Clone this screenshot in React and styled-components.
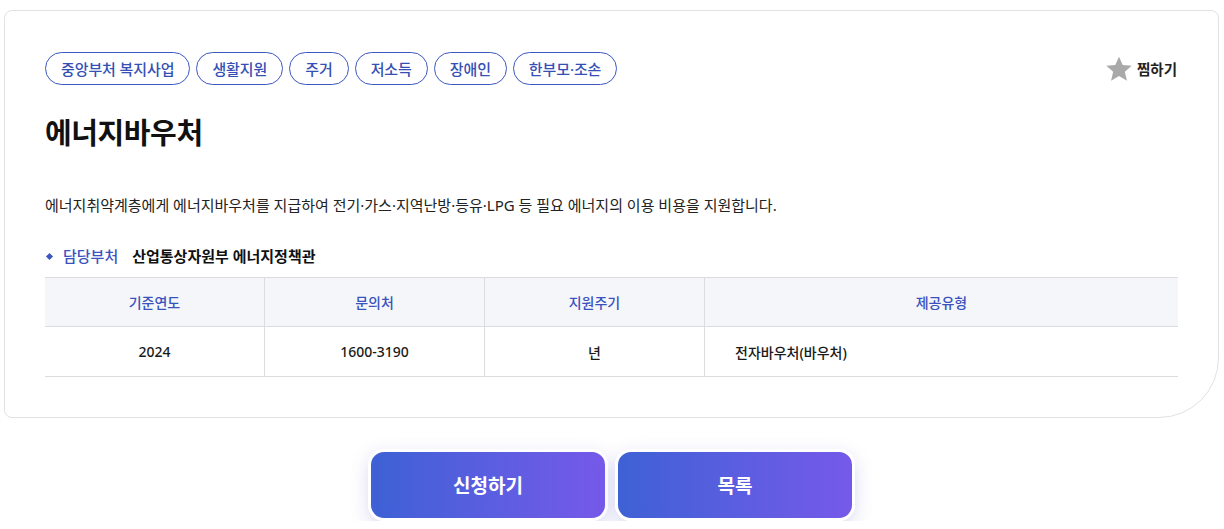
import React from "react";
import styled, { createGlobalStyle } from "styled-components";

const Global = createGlobalStyle`
  html, body { margin: 0; padding: 0; background: #fff; }
  body { font-family: "Noto Sans", "Noto Sans CJK KR", sans-serif; color: #222; }
  * { box-sizing: border-box; }
`;

const Page = styled.div`
  padding: 10px 5px 0 4px;
  display: flex;
  flex-direction: column;
`;

const Card = styled.section`
  border: 1px solid #e2e2e2;
  border-radius: 8px 8px 60px 8px;
  padding: 41px 40px 40px 40px;
  display: flex;
  flex-direction: column;
`;

const TopRow = styled.div`
  display: flex;
  justify-content: space-between;
  align-items: center;
`;

const Tags = styled.ul`
  display: flex;
  gap: 6px;
  list-style: none;
  margin: 0;
  padding: 0;
`;

const Tag = styled.li`
  height: 33px;
  padding: 0 15px;
  border: 1px solid #3d57c2;
  border-radius: 17px;
  color: #3550b4;
  font-size: 15px;
  font-weight: 500;
  display: flex;
  align-items: center;
  letter-spacing: -0.1px;
`;

const Like = styled.button`
  display: flex;
  align-items: center;
  gap: 4px;
  border: 0;
  background: none;
  padding: 0;
  font-family: inherit;
  font-size: 14.5px;
  font-weight: 700;
  color: #222;
  margin-right: 1px;
  cursor: pointer;
`;

const Title = styled.h1`
  margin: 28px 0 0;
  font-size: 29px;
  font-weight: 700;
  color: #111;
  letter-spacing: -0.4px;
  line-height: 40px;
`;

const Desc = styled.p`
  margin: 40px 0 0;
  font-size: 15px;
  color: #222;
  line-height: 24px;
`;

const Dept = styled.div`
  margin-top: 27px;
  display: flex;
  align-items: center;
  font-size: 15px;
  font-weight: 700;
  line-height: 24px;
`;

const Diamond = styled.span`
  width: 5px;
  height: 5px;
  background: #3d57c2;
  transform: rotate(45deg);
  margin: 0 11px 0 2px;
`;

const DeptLabel = styled.span`
  color: #3a52bd;
  font-weight: 500;
  margin-right: 14px;
`;

const DeptValue = styled.span`
  color: #111;
`;

const Table = styled.div`
  margin-top: 9px;
  display: grid;
  grid-template-columns: 219px 220px 220px 1fr;
  border-top: 1px solid #dcdce0;
  border-bottom: 1px solid #dcdce0;
`;

const Th = styled.div`
  height: 49px;
  background: #f5f6fa;
  color: #3a52bd;
  font-size: 14px;
  font-weight: 500;
  display: flex;
  align-items: center;
  justify-content: center;
  border-bottom: 1px solid #dcdce0;
  border-left: ${p => (p.$first ? "0" : "1px solid #dcdce0")};
`;

const Td = styled.div`
  height: 49px;
  color: #1a1a1a;
  font-size: 14px;
  font-weight: 500;
  display: flex;
  align-items: center;
  justify-content: ${p => (p.$left ? "flex-start" : "center")};
  padding-left: ${p => (p.$left ? "30px" : "0")};
  border-left: ${p => (p.$first ? "0" : "1px solid #dcdce0")};
`;

const Actions = styled.div`
  margin-top: 31px;
  display: flex;
  justify-content: center;
  gap: 7px;
`;

const ActionButton = styled.button`
  width: 240px;
  height: 72px;
  border: 3px solid #fff;
  border-radius: 16px;
  background: linear-gradient(90deg, #3e61d5 0%, #5a5ee0 50%, #7659e9 100%);
  color: #fff;
  font-family: inherit;
  font-size: 19px;
  font-weight: 700;
  box-shadow: 0 6px 18px rgba(90, 90, 200, 0.22);
  cursor: pointer;
`;

const StarIcon = () => (
  <svg width="28" height="28" viewBox="0 0 24 24" aria-hidden="true">
    <path
      d="M12 1.4l3.2 7.1 7.7.7-5.9 5.1 1.8 7.7L12 18.1l-6.8 4 1.8-7.7-5.9-5.1 7.7-.7z"
      fill="#a9a9a9"
    />
  </svg>
);

const tags = ["중앙부처 복지사업", "생활지원", "주거", "저소득", "장애인", "한부모·조손"];
const heads = ["기준연도", "문의처", "지원주기", "제공유형"];
const cells = ["2024", "1600-3190", "년", "전자바우처(바우처)"];

export default function App() {
  return (
    <Page>
      <Global />
      <Card>
        <TopRow>
          <Tags>
            {tags.map(t => (
              <Tag key={t}>{t}</Tag>
            ))}
          </Tags>
          <Like>
            <StarIcon />
            찜하기
          </Like>
        </TopRow>
        <Title>에너지바우처</Title>
        <Desc>
          에너지취약계층에게 에너지바우처를 지급하여 전기·가스·지역난방·등유·LPG 등 필요 에너지의 이용 비용을 지원합니다.
        </Desc>
        <Dept>
          <Diamond />
          <DeptLabel>담당부처</DeptLabel>
          <DeptValue>산업통상자원부 에너지정책관</DeptValue>
        </Dept>
        <Table>
          {heads.map((h, i) => (
            <Th key={h} $first={i === 0}>{h}</Th>
          ))}
          {cells.map((c, i) => (
            <Td key={c} $first={i === 0} $left={i === 3}>{c}</Td>
          ))}
        </Table>
      </Card>
      <Actions>
        <ActionButton>신청하기</ActionButton>
        <ActionButton>목록</ActionButton>
      </Actions>
    </Page>
  );
}
